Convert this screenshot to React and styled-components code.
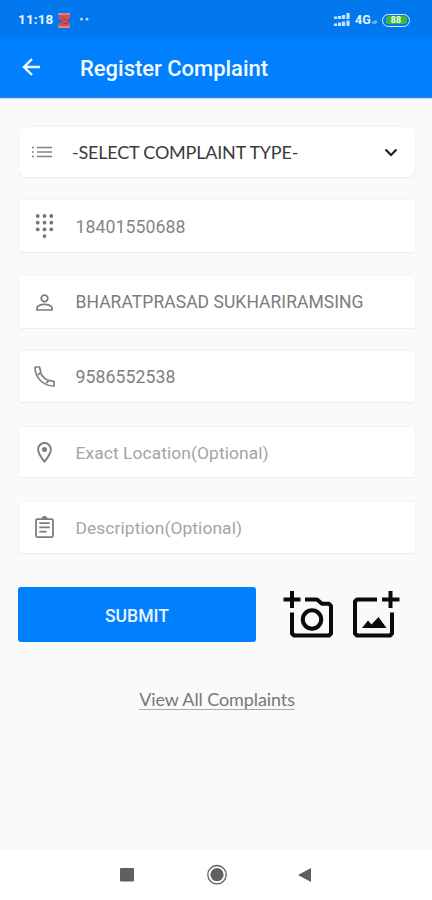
import React from "react";
import styled, { createGlobalStyle } from "styled-components";

const GlobalStyle = createGlobalStyle`
  * { box-sizing: border-box; }
  body { margin: 0; background: #fafafa; font-family: Roboto, sans-serif; }
  button, a { font: inherit; color: inherit; }
`;
const Screen = styled.div`
  width: 432px; height: 900px; display: flex; flex-direction: column;
  background: #fafafa; overflow: hidden;
`;
const StatusBar = styled.div`
  height: 37px; flex: none; display: flex; align-items: center;
  padding: 3px 22px 0 18px; background: #0278ef; color: #e9f3ff;
`;
const Clock = styled.span`
  width: 39px; font-size: 13.4px; font-weight: 700; line-height: 16px;
  letter-spacing: 0.2px; white-space: nowrap;
`;
const Network = styled.span`
  width: 17px; margin-left: 5px; font-size: 12.5px; font-weight: 700; line-height: 16px;
`;
const Spacer = styled.div`flex: 1;`;
const Battery = styled.div`
  width: 28px; height: 13px; padding: 1px 2.5px; display: flex; border: 1.5px solid #d5efff;
  border-radius: 7px; margin-left: 5px;
`;
const Charge = styled.span`
  flex: 1; height: 8px; background: #43b536; color: #e8ffe5; border-radius: 3px;
  font-size: 9px; line-height: 8.5px; font-weight: 700; text-align: center;
`;
const AppBar = styled.header`
  height: 61px; flex: none; display: flex; align-items: center;
  padding: 0 22px; background: #007fff; color: #f3f9ff;
  border-bottom: 1px solid #2c88e5; box-shadow: 0 1px 1px #c7dcf1;
`;
const Title = styled.h1`
  margin: 3px 0 0 38px; font-size: 22px; font-weight: 500; line-height: 28px;
  letter-spacing: -0.02px;
`;
const Glyph = styled.svg`display: block; flex: none; overflow: visible;`;
const BackButton = styled.button`
  width: 20px; height: 20px; padding: 0; border: 0; background: none; color: #f3f9ff;
`;
const Form = styled.main`
  flex: 1; display: flex; flex-direction: column; padding: 29px 17px 0 19px;
`;
const Field = styled.div`
  height: ${(p) => p.$height}px; margin-bottom: ${(p) => p.$gap}px; flex: none;
  display: flex; align-items: center; padding: ${(p) => (p.$select ? "0 17px 0 11px" : "0 13px")};
  background: #fff; border-radius: ${(p) => (p.$select ? 8 : 3)}px;
  box-shadow: 0 0 2px #e9e9e9, 0 1px 1px #eeeeee;
`;
const Value = styled.span`
  flex: 1; margin: ${(p) => p.$drop || 0}px 0 0 ${(p) => (p.$select ? 18 : 18.5)}px; white-space: nowrap;
  color: ${(p) => p.$color}; font-family: ${(p) => (p.$select ? "Lato" : "Roboto")}, sans-serif;
  font-size: ${(p) => p.$size}px; line-height: 24px; letter-spacing: ${(p) => p.$tracking}px;
`;
const Actions = styled.div`
  display: flex; align-items: flex-start; margin: 0 0 0 -1px; height: 55px; flex: none;
`;
const Submit = styled.button`
  width: 238px; height: 55px; padding: 2px 0 0; border: 0; border-radius: 3px;
  background: #007fff; color: #e8f4ff; font-size: 17.6px; font-weight: 500; letter-spacing: 0;
`;
const MediaButton = styled.button`
  padding: 0; border: 0; background: none; color: #0b0b0b; width: 48px; height: 50px;
  margin: 2px 0 0 ${(p) => p.$gap}px;
`;
const LinkRow = styled.div`display: flex; justify-content: center; margin-top: 46px;`;
const AllLink = styled.a`
  height: 22px; color: #777; border-bottom: 1px solid #aaa; text-decoration: none;
  font-family: Lato, sans-serif; font-size: 18px; line-height: 23px; letter-spacing: -0.1px;
`;
const NavBar = styled.nav`
  height: 50px; flex: none; display: flex; align-items: center; background: #fff;
  color: #606060; padding-left: 120px;
`;
const NavItem = styled.span`margin-right: ${(p) => p.$after}px;`;

const paths = {
  person: "M12 4a4 4 0 1 0 0 8 4 4 0 0 0 0-8m0 1.7a2.3 2.3 0 1 1 0 4.6 2.3 2.3 0 0 1 0-4.6M12 13c-2.67 0-8 1.34-8 4v3h16v-3c0-2.66-5.33-4-8-4m0 1.7c2.97 0 6.3 1.46 6.3 2.3v1.4H5.7V17c0-.84 3.33-2.3 6.3-2.3",
  location: "M12 2C8.13 2 5 5.13 5 9c0 5.25 7 13 7 13s7-7.75 7-13c0-3.87-3.13-7-7-7M6.8 9c0-2.86 2.34-5.2 5.2-5.2s5.2 2.34 5.2 5.2c0 2.88-2.98 7.39-5.2 10.1C9.82 16.41 6.8 11.85 6.8 9",
  note: "M7 15h7v1.7H7zm0-4h10v1.7H7zm0-4h10v1.7H7zm12-4h-4.18C14.4 1.84 13.3 1 12 1s-2.4.84-2.82 2H5c-1.1 0-2 .9-2 2v15c0 1.1.9 2 2 2h14c1.1 0 2-.9 2-2V5c0-1.1-.9-2-2-2m.3 17.3H4.7V4.7h14.6z",
};

function FieldIcon({ name }) {
  if (name === "list") return (
    <Glyph width="24" height="24" viewBox="0 0 24 24" fill="none" stroke="#858585" strokeWidth="1.6">
      <path d="M2 7.5h2M7 7.5h15M2 12h2M7 12h15M2 16.5h2M7 16.5h15" />
    </Glyph>
  );
  if (name === "keypad") return (
    <Glyph width="25" height="26" viewBox="0 0 25 26" fill="#777">
      {[3, 9.7, 16.4].flatMap((y) => [5.7, 12.5, 19.3].map((x) => (
        <circle key={`${x}-${y}`} cx={x} cy={y} r="1.9" />
      )))}
      <circle cx="12.5" cy="23.1" r="1.9" />
    </Glyph>
  );
  if (name === "phone") return (
    <Glyph width="25" height="25" viewBox="0 0 25 25" fill="none" stroke="#808080" strokeWidth="1.7" strokeLinejoin="round">
      <path d="M3 3h4.5l1.3 5-2.8 2.8M3 3c0 10.8 8 18.9 19 19v-4.4L17 16.3l-2.8 2.8M6 10.8l2.8-2.6M8.4 8.6c1.7 3.7 4.2 6.2 8 8" />
    </Glyph>
  );
  return (
    <Glyph width="25" height="25" viewBox="0 0 24 24" fill="#7c7c7c">
      <path d={paths[name]} />
      {name === "location" && <circle cx="12" cy="9" r="2.4" />}
    </Glyph>
  );
}

const fields = [
  { icon: "keypad", text: "18401550688", height: 52, gap: 24, color: "#858585", size: 17.7, tracking: 0.05, drop: 1 },
  { icon: "person", text: "BHARATPRASAD SUKHARIRAMSING", height: 52, gap: 23, color: "#7c7c7c", size: 17.5, tracking: 0.05 },
  { icon: "phone", text: "9586552538", height: 51, gap: 25, color: "#808080", size: 17.7, tracking: 0.05, drop: 1 },
  { icon: "location", text: "Exact Location(Optional)", height: 50, gap: 25, color: "#a4a4a4", size: 17.4, tracking: 0.08, drop: 1 },
  { icon: "note", text: "Description(Optional)", height: 51, gap: 34, color: "#a4a4a4", size: 17.4, tracking: 0.08, drop: 0 },
];

export default function App() {
  return (
    <Screen>
      <GlobalStyle />
      <StatusBar>
        <Clock>11:18</Clock>
        <Glyph width="15" height="15" viewBox="0 0 15 15" fill="none">
          <path d="M2 1h11v4L9 8l4 2v4H1v-3l6-3-5-2Z" fill="#e6483c" />
          <path d="M1 1h12M1 14h12" stroke="#df9a9b" strokeWidth="1.4" />
          <path d="m5 4 4 3M6 11l5-1" stroke="#81435e" />
        </Glyph>
        <Glyph width="20" height="10" viewBox="0 0 20 10" fill="#b9dcff">
          <circle cx="9.5" cy="4.2" r="1.4" /><circle cx="15" cy="4.2" r="1.4" />
        </Glyph>
        <Spacer />
        <Glyph width="17" height="14" viewBox="0 0 17 14" fill="none" stroke="#c4e3ff" strokeWidth="3.2">
          <path d="M2.5 3.5V6M6.5 3v3M10.5 2v4M15 0v6M2.5 10.5V13M6.5 9.5V13M10.5 8.5V13M15 7.5V13" />
        </Glyph>
        <Network>4G</Network>
        <Glyph width="5" height="6" viewBox="0 0 5 6" fill="none" stroke="#91c6fa" strokeWidth="1.2">
          <path d="M1 4v3M3 7V4h2M3 5.5h2" />
        </Glyph>
        <Battery><Charge>88</Charge></Battery>
      </StatusBar>
      <AppBar>
        <BackButton aria-label="Back">
          <Glyph width="20" height="20" viewBox="0 0 20 20" fill="none" stroke="currentColor" strokeWidth="2.4">
            <path d="M18 10H3M10 2 2 10l8 8" />
          </Glyph>
        </BackButton>
        <Title>Register Complaint</Title>
      </AppBar>
      <Form>
        <Field $select $height={50} $gap={23}>
          <FieldIcon name="list" />
          <Value $select $color="#3a3a3a" $size={18} $tracking={-0.2}>-SELECT COMPLAINT TYPE-</Value>
          <Glyph width="14" height="9" viewBox="0 0 14 9" fill="none" stroke="#222" strokeWidth="2.2">
            <path d="m1.5 1.5 5.5 5.5 5.5-5.5" />
          </Glyph>
        </Field>
        {fields.map((f) => (
          <Field key={f.icon} $height={f.height} $gap={f.gap}>
            <FieldIcon name={f.icon} />
            <Value $color={f.color} $size={f.size} $tracking={f.tracking} $drop={f.drop}>{f.text}</Value>
          </Field>
        ))}
        <Actions>
          <Submit>SUBMIT</Submit>
          <MediaButton $gap={27} aria-label="Take photo">
            <Glyph width="52" height="48" viewBox="0 0 52 48" fill="none" stroke="currentColor" strokeWidth="4" strokeLinejoin="round">
              <path d="M9 1v17M.5 9.5h17M22 9.5h12l5 4.3h7l2 2V43.5l-2 2H11l-2-2V22.5" />
              <circle cx="29" cy="29.5" r="9.2" />
            </Glyph>
          </MediaButton>
          <MediaButton $gap={21} aria-label="Add image">
            <Glyph width="48" height="48" viewBox="0 0 48 48" fill="none" stroke="currentColor" strokeWidth="4" strokeLinejoin="round">
              <path d="M25 9.5H5l-2 2v32l2 2h33l2-2V22.500M38.500 1v17M30 9.500h17.500" />
              <path d="m10 38 6-7.500 3.500 4 7-7.500 8 11Z" fill="currentColor" stroke="none" />
            </Glyph>
          </MediaButton>
        </Actions>
        <LinkRow><AllLink href="#complaints">View All Complaints</AllLink></LinkRow>
      </Form>
      <NavBar>
        <NavItem $after={73}><Glyph width="14" height="14"><rect width="14" height="13.5" rx="1" fill="#606060" /></Glyph></NavItem>
        <NavItem $after={71}>
          <Glyph width="20" height="20" viewBox="0 0 20 20">
            <circle cx="10" cy="9.7" r="9.2" fill="none" stroke="#606060" strokeWidth="1.3" />
            <circle cx="10" cy="9.7" r="6.6" fill="#606060" />
          </Glyph>
        </NavItem>
        <NavItem $after={0}><Glyph width="13" height="14"><path d="M13 0v14L0 7Z" fill="#606060" /></Glyph></NavItem>
      </NavBar>
    </Screen>
  );
}
